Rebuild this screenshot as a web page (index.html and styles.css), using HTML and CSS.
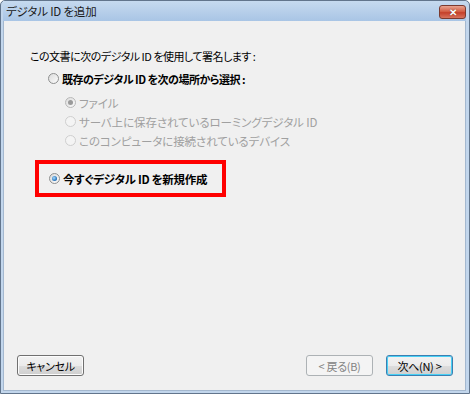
FILE: index.html
```html
<!DOCTYPE html>
<html lang="ja">
<head>
  <meta charset="UTF-8" />
  <title>デジタル ID を追加</title>
  <link rel="stylesheet" href="styles.css">
</head>
<body>
  <div class="window">
    <div class="titlebar">
      <span class="title">デジタル ID を追加</span>
      <span class="close-btn">✕</span>
    </div>

    <div class="content">
      <p class="lead">この文書に次のデジタル ID を使用して署名します :</p>

      <label class="option bold">
        <span class="radio"></span>
        既存のデジタル ID を次の場所から選択 :
      </label>

      <div class="sub-options">
        <label class="option disabled">
          <span class="radio checked-grey"></span>
          ファイル
        </label>
        <label class="option disabled">
          <span class="radio faint"></span>
          サーバ上に保存されているローミングデジタル ID
        </label>
        <label class="option disabled">
          <span class="radio faint"></span>
          このコンピュータに接続されているデバイス
        </label>
      </div>

      <div class="highlight">
        <label class="option bold">
          <span class="radio checked"></span>
          今すぐデジタル ID を新規作成
        </label>
      </div>

      <div class="footer">
        <button class="btn">キャンセル</button>
        <div class="nav-buttons">
          <button class="btn" disabled>&lt; 戻る(B)</button>
          <button class="btn default">次へ(N) &gt;</button>
        </div>
      </div>
    </div>
  </div>
</body>
</html>
```

FILE: styles.css
```css
body {
  margin: 0;
  background: #ffffff;
  font-family: "Noto Sans CJK JP", "Noto Sans", sans-serif;
  font-feature-settings: "palt";
  font-size: 11px;
  letter-spacing: -0.5px;
  color: #000;
}

.window {
  width: 470px;
  height: 394px;
  box-sizing: border-box;
  border: 1px solid #62758c;
  border-radius: 5px 5px 0 0;
  background: #c2d6ec;
  padding: 0 3px 2px 2px;
  display: flex;
  flex-direction: column;
}

.titlebar {
  height: 20px;
  display: flex;
  align-items: center;
  justify-content: space-between;
  background: linear-gradient(to bottom, #c6daef, #a9c5e5);
  padding: 0 0 0 3px;
}

.title {
  font-size: 11.5px;
  color: #1a1a1a;
  letter-spacing: -0.2px;
}

.close-btn {
  width: 25px;
  height: 12px;
  margin-top: 1px;
  border: 1px solid #7b3a2f;
  border-radius: 3px;
  background: linear-gradient(to bottom, #e8a491, #d1583e 50%, #c4402b 55%, #d8735d);
  color: #fff;
  font-size: 10px;
  font-weight: bold;
  line-height: 12px;
  letter-spacing: 0;
  text-align: center;
  text-shadow: 0 0 1px #5a1a10;
}

.content {
  flex: 1;
  background: #f0f0f0;
  border: 1px solid #a4b8cf;
  border-top: none;
  display: flex;
  flex-direction: column;
}

.lead {
  margin: 27px 0 0 26px;
  line-height: 16px;
}

.option {
  display: flex;
  align-items: center;
  gap: 3px;
  line-height: 16px;
  height: 19px;
}

.bold {
  font-weight: bold;
}

.content > .option {
  margin: 5px 0 0 44px;
}

.sub-options {
  margin: 5px 0 0 61px;
  font-size: 11.5px;
  letter-spacing: -0.1px;
}

.disabled {
  color: #a0a0a0;
}

.radio {
  width: 9px;
  height: 9px;
  border: 1px solid #8e8f8f;
  border-radius: 50%;
  background: linear-gradient(135deg, #dcdcdc, #fbfbfb);
  flex: none;
  position: relative;
}

.radio.faint {
  border-color: #cfcfcf;
  background: #f4f4f4;
}

.radio.checked-grey::after,
.radio.checked::after {
  content: "";
  position: absolute;
  left: 2px;
  top: 2px;
  width: 5px;
  height: 5px;
  border-radius: 50%;
  background: #9a9a9a;
}

.radio.checked-grey {
  border-color: #b8b8b8;
}

.radio.checked::after {
  background: radial-gradient(circle at 40% 40%, #a9dcff, #1d6bb5 70%);
}

.highlight {
  margin: 10px 0 0 31px;
  width: 173px;
  height: 29px;
  border: 4px solid #ff0000;
  display: flex;
  align-items: center;
  padding-left: 10px;
  font-size: 11.5px;
  letter-spacing: -0.3px;
}

.footer {
  margin-top: auto;
  display: flex;
  justify-content: space-between;
  align-items: center;
  padding: 0 12px 14px 13px;
}

.nav-buttons {
  display: flex;
  gap: 13px;
}

.btn {
  font-family: inherit;
  font-feature-settings: "palt";
  font-size: 11px;
  letter-spacing: -0.3px;
  width: 67px;
  height: 21px;
  padding: 0;
  border: 1px solid #707070;
  border-radius: 3px;
  background: linear-gradient(to bottom, #f2f2f2 0%, #ebebeb 50%, #dddddd 51%, #cfcfcf 100%);
  box-shadow: inset 0 0 0 1px #fcfcfc;
  color: #000;
}

.btn:disabled {
  border-color: #adb2b5;
  background: #f4f4f4;
  box-shadow: none;
  color: #838383;
}

.btn.default {
  border-color: #3c7fb1;
  box-shadow: inset 0 0 0 1px #48d0f5;
}
```
